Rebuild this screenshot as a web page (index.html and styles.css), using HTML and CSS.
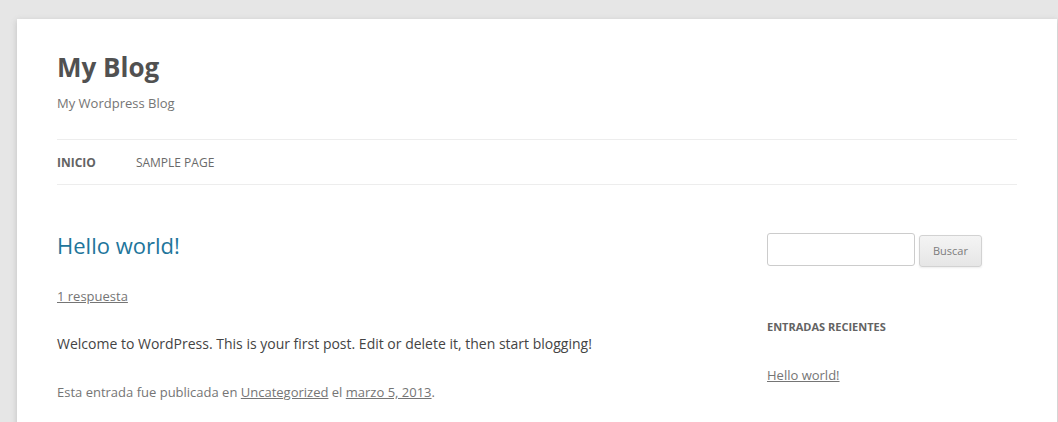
FILE: index.html
```html
<!DOCTYPE html>
<html lang="es">
<head>
<meta charset="utf-8">
<title>My Blog</title>
<link rel="stylesheet" href="styles.css">
</head>
<body>
<div class="site">
  <header class="site-header">
    <h1 class="site-title"><a href="#">My Blog</a></h1>
    <h2 class="site-description">My Wordpress Blog</h2>
    <nav class="main-navigation">
      <ul class="nav-menu">
        <li class="current"><a href="#">Inicio</a></li>
        <li><a href="#">Sample Page</a></li>
      </ul>
    </nav>
  </header>
  <div class="main">
    <div class="site-content">
      <article class="post">
        <header class="entry-header">
          <h1 class="entry-title"><a href="#">Hello world!</a></h1>
          <div class="comments-link"><a href="#">1 respuesta</a></div>
        </header>
        <div class="entry-content">
          <p>Welcome to WordPress. This is your first post. Edit or delete it, then start blogging!</p>
        </div>
        <footer class="entry-meta">Esta entrada fue publicada en <a href="#">Uncategorized</a> el <a href="#">marzo 5, 2013</a>.</footer>
      </article>
    </div>
    <aside class="widget-area">
      <div class="widget widget-search">
        <form class="searchform">
          <input type="text" class="search-input">
          <button type="button" class="search-button">Buscar</button>
        </form>
      </div>
      <div class="widget">
        <h3 class="widget-title">Entradas recientes</h3>
        <ul class="widget-list">
          <li><a href="#">Hello world!</a></li>
        </ul>
      </div>
    </aside>
  </div>
</div>
</body>
</html>
```

FILE: styles.css
```css
html, body {
  margin: 0;
  padding: 0;
}
body {
  background: #e6e6e6;
  font-family: "Open Sans", "Liberation Sans", sans-serif;
  color: #444;
  font-size: 14px;
  line-height: 1.714285714;
  overflow: hidden;
}
.site {
  margin: 19px 0 0 17px;
  width: 960px;
  padding: 0 40px;
  background: #fff;
  box-shadow: 0 2px 6px rgba(100, 100, 100, 0.3);
  min-height: 600px;
}
.site-header {
  padding: 24px 0 0;
}
.site-title {
  margin: 0;
  font-size: 26px;
  line-height: 48px;
  font-weight: bold;
}
.site-title a {
  color: #515151;
  text-decoration: none;
}
.site-description {
  margin: 0;
  font-size: 13px;
  line-height: 24px;
  font-weight: normal;
  color: #757575;
}
.main-navigation {
  margin-top: 24px;
  border-top: 1px solid #ededed;
  border-bottom: 1px solid #ededed;
}
.nav-menu {
  list-style: none;
  margin: 0;
  padding: 1px 0 0;
  display: flex;
}
.nav-menu li {
  margin: 0 40px 0 0;
  font-size: 12px;
  line-height: 43px;
}
.nav-menu a {
  color: #6a6a6a;
  text-decoration: none;
  text-transform: uppercase;
  white-space: nowrap;
}
.nav-menu .current a {
  color: #636363;
  font-weight: bold;
}
.main {
  display: flex;
  justify-content: space-between;
  padding-top: 48px;
}
.site-content {
  width: 625px;
}
.post {
  margin: 0;
}
.entry-header {
  margin-bottom: 24px;
}
.entry-title {
  margin: 0;
  font-size: 22px;
  line-height: 24px;
  font-weight: normal;
}
.entry-title a {
  color: #21759b;
  text-decoration: none;
}
.comments-link {
  margin-top: 27px;
  font-size: 13px;
  line-height: 24px;
}
.comments-link a {
  color: #757575;
}
.entry-content p {
  margin: 0 0 24px;
  font-size: 14px;
  line-height: 24px;
}
.entry-meta {
  font-size: 13px;
  line-height: 24px;
  color: #757575;
}
.entry-meta a {
  color: #757575;
}
.widget-area {
  width: 250px;
}
.widget-search {
  margin-bottom: 48px;
}
.searchform {
  display: flex;
  align-items: flex-start;
  gap: 4px;
}
.search-input {
  box-sizing: border-box;
  width: 148px;
  height: 33px;
  padding: 6px;
  border: 1px solid #ccc;
  border-radius: 3px;
  font-family: inherit;
  font-size: 12px;
  color: #666;
  background: #fff;
  margin: 0;
}
.search-button {
  box-sizing: border-box;
  margin: 2px 0 0;
  width: 63px;
  height: 32px;
  padding: 6px 10px;
  font-family: inherit;
  font-size: 11px;
  line-height: 1.428571429;
  color: #7c7c7c;
  background: linear-gradient(to bottom, #f4f4f4, #e6e6e6);
  border: 1px solid #d2d2d2;
  border-radius: 3px;
  box-shadow: 0 1px 2px rgba(64, 64, 64, 0.1);
}
.widget-title {
  margin: 0 0 24px;
  font-size: 11px;
  line-height: 24px;
  font-weight: bold;
  text-transform: uppercase;
  color: #636363;
}
.widget-list {
  list-style: none;
  margin: 0;
  padding: 0;
  font-size: 13px;
  line-height: 24px;
}
.widget-list a {
  color: #757575;
}
```
